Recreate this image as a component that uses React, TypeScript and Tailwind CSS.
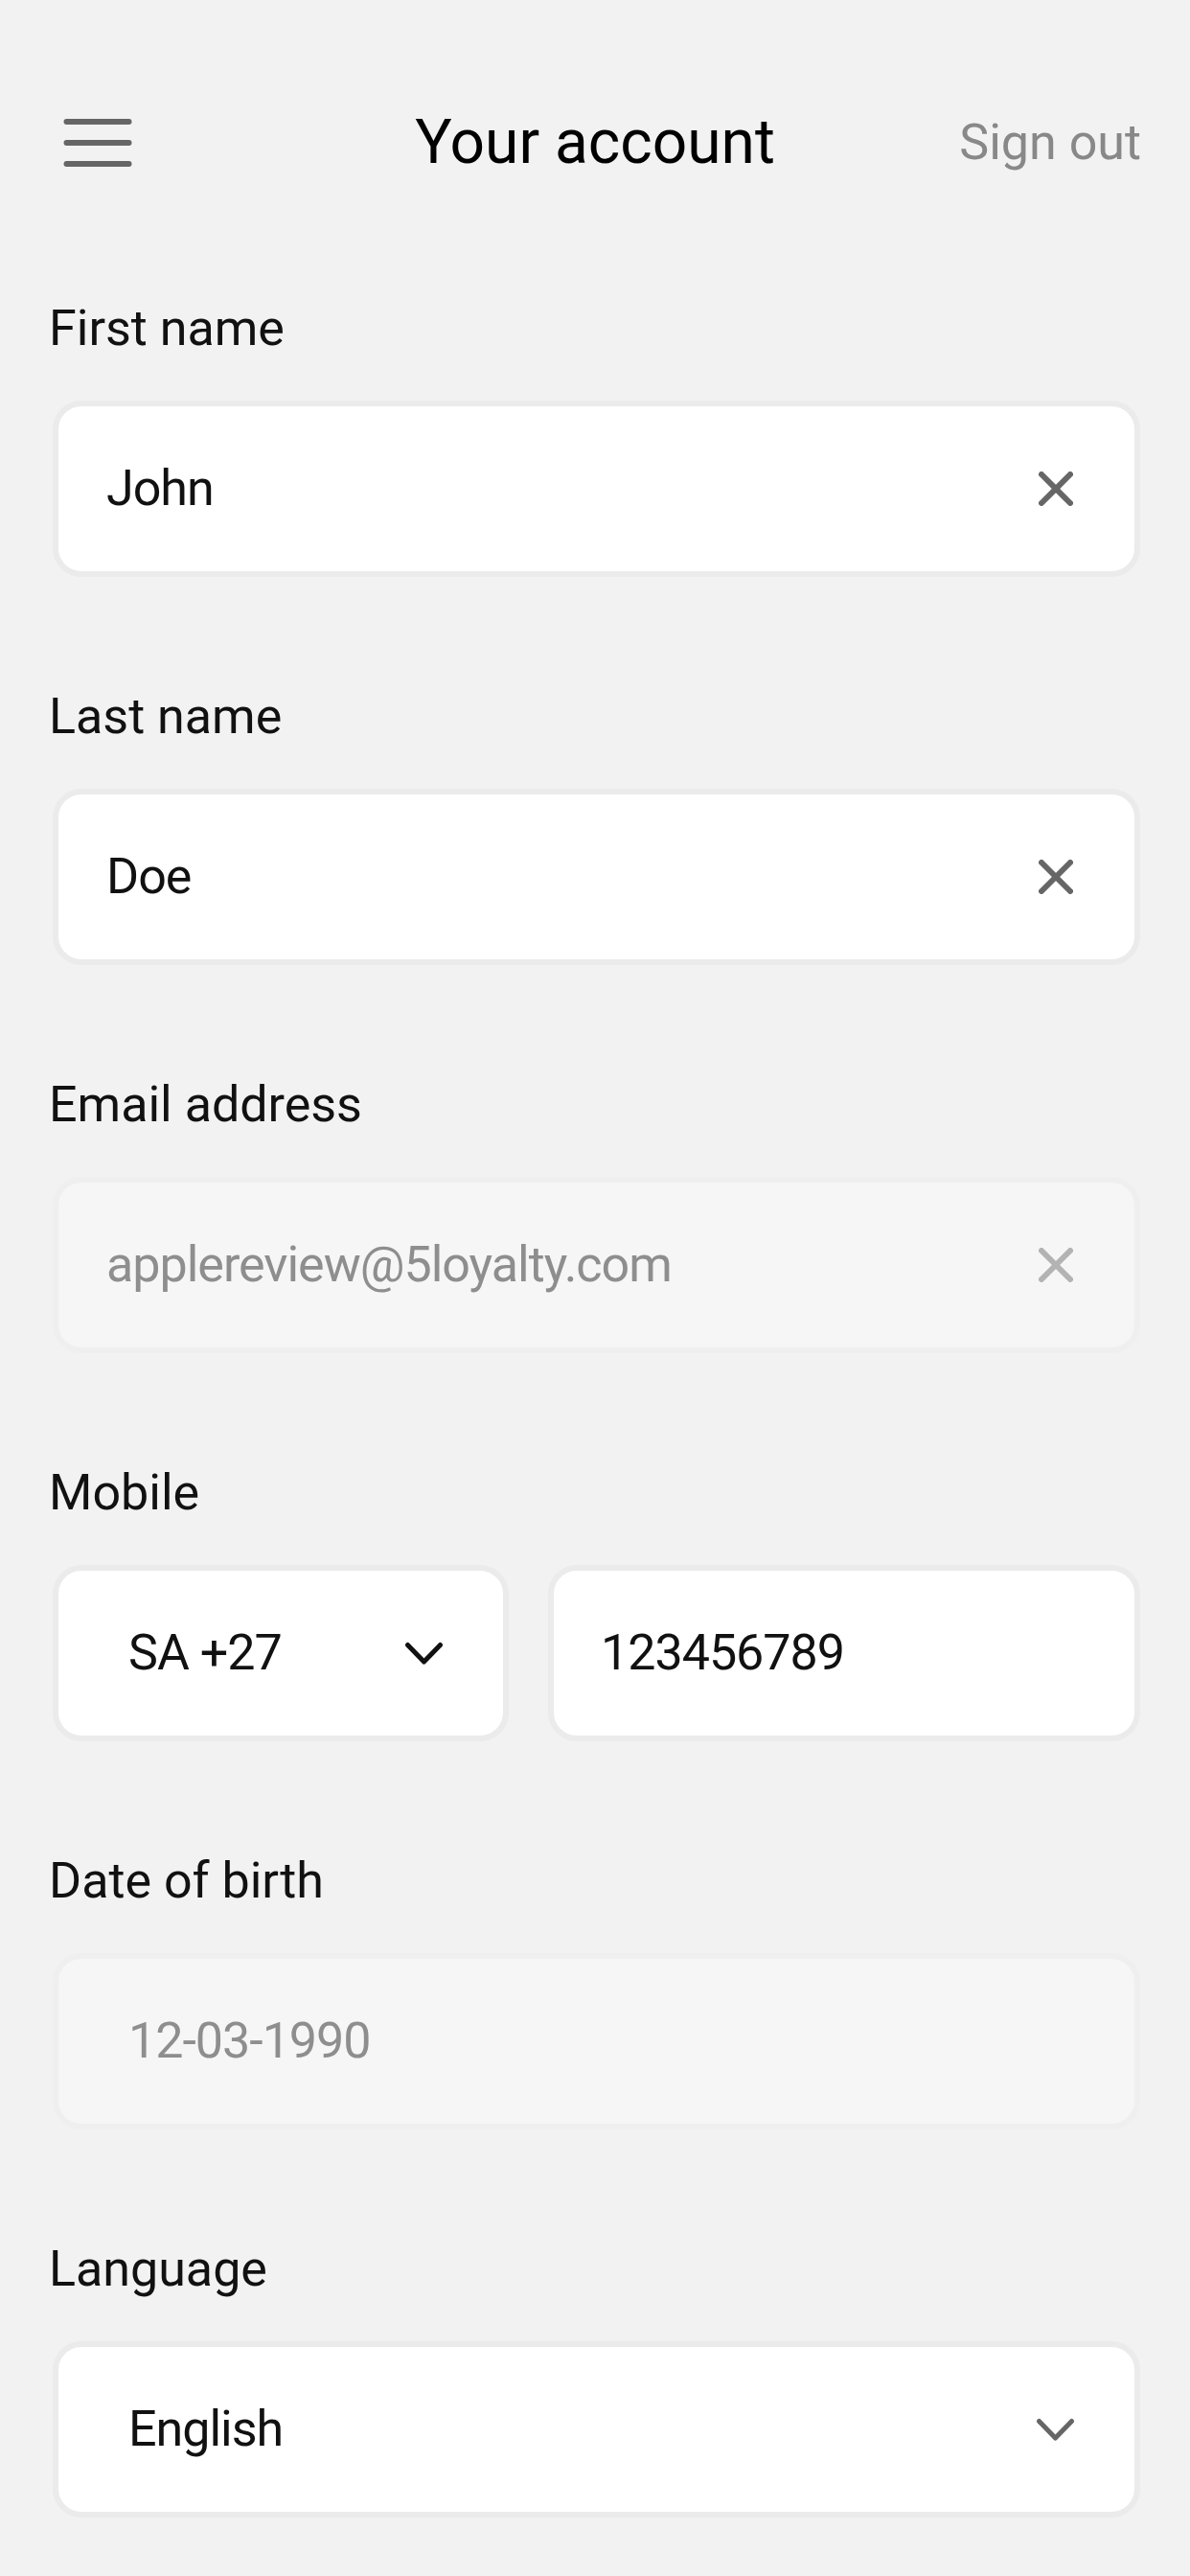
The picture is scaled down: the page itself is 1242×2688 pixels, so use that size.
import React from 'react';

function MenuIcon() {
  return (
    <svg width="72" height="50" viewBox="0 0 72 50" fill="none">
      <line x1="3.5" y1="3" x2="68.5" y2="3" stroke="#666" strokeWidth="6" strokeLinecap="round" />
      <line x1="3.5" y1="25" x2="68.5" y2="25" stroke="#666" strokeWidth="6" strokeLinecap="round" />
      <line x1="3.5" y1="47" x2="68.5" y2="47" stroke="#666" strokeWidth="6" strokeLinecap="round" />
    </svg>
  );
}

function ClearIcon({ color }: { color: string }) {
  return (
    <svg width="36" height="36" viewBox="0 0 36 36" fill="none">
      <line x1="3" y1="3" x2="33" y2="33" stroke={color} strokeWidth="6" strokeLinecap="round" />
      <line x1="33" y1="3" x2="3" y2="33" stroke={color} strokeWidth="6" strokeLinecap="round" />
    </svg>
  );
}

function Chevron({ color }: { color: string }) {
  return (
    <svg width="41" height="25" viewBox="0 0 41 25" fill="none">
      <polyline
        points="3.5,3.5 20.5,21 37.5,3.5"
        stroke={color}
        strokeWidth="5"
        strokeLinecap="round"
        strokeLinejoin="round"
        fill="none"
      />
    </svg>
  );
}

function Label({ children }: { children: React.ReactNode }) {
  return <div className="text-[52px] leading-[60px] text-[#111]">{children}</div>;
}

function TextField({ value, disabled }: { value: string; disabled?: boolean }) {
  return (
    <div
      className={`ml-[4px] mr-[1px] mt-[45px] h-[184px] rounded-[30px] border-[6px] flex items-center justify-between pl-[50px] pr-[64px] ${
        disabled ? 'bg-[#f6f6f6] border-[#efefef]' : 'bg-white border-[#ebebeb]'
      }`}
    >
      <span
        className={`text-[52px] leading-none tracking-[-1px] ${disabled ? 'text-[#8e8e8e]' : 'text-[#111]'}`}
      >
        {value}
      </span>
      <ClearIcon color={disabled ? '#b3b3b3' : '#666'} />
    </div>
  );
}

export default function App() {
  return (
    <div className="min-h-screen bg-[#f2f2f2] font-['Roboto',sans-serif] px-[51px] pt-[99px]">
      {/* Header */}
      <header className="h-[100px] grid grid-cols-[1fr_auto_1fr] items-center">
        <div className="pl-[15px]">
          <MenuIcon />
        </div>
        <h1 className="text-[64px] leading-none text-black">Your account</h1>
        <div className="flex justify-end">
          <span className="text-[52px] leading-none text-[#888]">Sign out</span>
        </div>
      </header>

      <div className="mt-[114px] flex flex-col gap-[116px]">
        <section>
          <Label>First name</Label>
          <TextField value="John" />
        </section>

        <section>
          <Label>Last name</Label>
          <TextField value="Doe" />
        </section>

        <section>
          <Label>Email address</Label>
          <TextField value="applereview@5loyalty.com" disabled />
        </section>

        <section>
          <Label>Mobile</Label>
          <div className="ml-[4px] mr-[1px] mt-[45px] grid grid-cols-[476px_1fr] gap-[41px]">
            <div className="h-[184px] rounded-[30px] border-[6px] border-[#ebebeb] bg-white flex items-center justify-between pl-[73px] pr-[62px]">
              <span className="text-[52px] leading-none tracking-[-1px] text-[#111]">SA +27</span>
              <Chevron color="#111" />
            </div>
            <div className="h-[184px] rounded-[30px] border-[6px] border-[#ebebeb] bg-white flex items-center pl-[49px]">
              <span className="text-[52px] leading-none tracking-[-1px] text-[#111]">123456789</span>
            </div>
          </div>
        </section>

        <section>
          <Label>Date of birth</Label>
          <div className="ml-[4px] mr-[1px] mt-[45px] h-[184px] rounded-[30px] border-[6px] border-[#efefef] bg-[#f6f6f6] flex items-center pl-[73px]">
            <span className="text-[52px] leading-none tracking-[-1px] text-[#8e8e8e]">12-03-1990</span>
          </div>
        </section>

        <section>
          <Label>Language</Label>
          <div className="ml-[4px] mr-[1px] mt-[45px] h-[184px] rounded-[30px] border-[6px] border-[#ebebeb] bg-white flex items-center justify-between pl-[73px] pr-[62px]">
            <span className="text-[52px] leading-none tracking-[-1px] text-[#111]">English</span>
            <Chevron color="#666" />
          </div>
        </section>
      </div>
    </div>
  );
}
